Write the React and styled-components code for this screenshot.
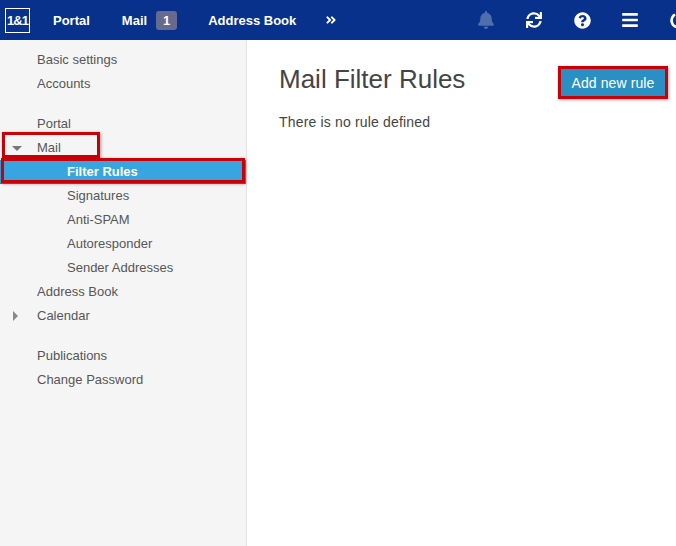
import React from "react";
import styled, { createGlobalStyle } from "styled-components";
import { FaBell, FaSync, FaQuestionCircle, FaBars, FaPowerOff, FaAngleDoubleRight } from "react-icons/fa";

const Global = createGlobalStyle`
  html, body { margin: 0; padding: 0; height: 100%; overflow: hidden; background: #fff; }
  body { font-family: "Liberation Sans", Arial, sans-serif; color: #444; }
  #root { height: 100%; }
`;

const Page = styled.div`
  width: 676px;
  height: 546px;
  display: flex;
  flex-direction: column;
  overflow: hidden;
`;

const TopBar = styled.header`
  flex: 0 0 40px;
  height: 40px;
  background: #08318b;
  display: flex;
  align-items: center;
  padding-left: 5px;
  color: #fff;
  overflow: hidden;
`;

const Logo = styled.div`
  width: 23px;
  height: 23px;
  border: 1px solid #fff;
  display: flex;
  align-items: center;
  justify-content: center;
  font-size: 13px;
  font-weight: 700;
  letter-spacing: -1px;
  margin-right: 23px;
  flex: none;
`;

const NavItem = styled.span`
  font-size: 13px;
  font-weight: 700;
  margin-right: ${(p) => p.$gap}px;
  white-space: nowrap;
`;

const Badge = styled.span`
  width: 21px;
  height: 19px;
  border-radius: 3px;
  background: #676a8e;
  color: #fff;
  font-size: 13px;
  font-weight: 700;
  display: flex;
  align-items: center;
  justify-content: center;
  margin-right: 31px;
  flex: none;
`;

const More = styled.span`
  display: flex;
  font-size: 12px;
  margin-right: 140px;
  flex: none;
`;

const IconSlot = styled.span`
  flex: none;
  width: 18px;
  margin-right: 30px;
  display: flex;
  justify-content: center;
  font-size: ${(p) => p.$size || 17}px;
  color: ${(p) => (p.$dim ? "#4f6eac" : "#fff")};
`;

const Body = styled.div`
  flex: 1;
  display: flex;
  min-height: 0;
`;

const Sidebar = styled.nav`
  width: 246px;
  flex: none;
  box-sizing: content-box;
  background: #f5f5f5;
  border-right: 1px solid #e3e3e3;
  padding-top: 8px;
`;

const Group = styled.div`
  margin-bottom: 16px;
`;

const Row = styled.div`
  position: relative;
  height: 24px;
  line-height: 24px;
  font-size: 13px;
  color: #555;
  padding-left: ${(p) => (p.$sub ? 67 : 37)}px;
`;

const ActiveRow = styled(Row)`
  background: #36a5e0;
  color: #fff;
  font-weight: 700;
  height: 23px;
  line-height: 23px;
  margin-bottom: 1px;
  box-shadow: 0 1px 0 #2c86b8;
`;

const ArrowDown = styled.i`
  position: absolute;
  left: 12px;
  top: 10px;
  border-style: solid;
  border-width: 5px 5px 0 5px;
  border-color: #777 transparent transparent transparent;
`;

const ArrowRight = styled.i`
  position: absolute;
  left: 13px;
  top: 7px;
  border-style: solid;
  border-width: 5px 0 5px 5px;
  border-color: transparent transparent transparent #888;
`;

const Annotation = styled.span`
  position: absolute;
  left: ${(p) => p.$left}px;
  top: ${(p) => p.$top}px;
  width: ${(p) => p.$w}px;
  height: ${(p) => p.$h}px;
  box-sizing: border-box;
  border: 3px solid #c90007;
  box-shadow: 1px 1px 3px rgba(0, 0, 0, 0.35);
  pointer-events: none;
`;

const Main = styled.main`
  flex: 1;
  padding: 24px 8px 0 32px;
  min-width: 0;
`;

const TitleRow = styled.div`
  display: flex;
  justify-content: space-between;
  align-items: flex-start;
`;

const Title = styled.h1`
  margin: 0;
  font-size: 26px;
  font-weight: 400;
  line-height: 30px;
  color: #444;
`;

const AddButton = styled.button`
  position: relative;
  width: 110px;
  height: 33px;
  margin-top: 2px;
  border: 0;
  padding: 0;
  background: #2a90c4;
  color: #fff;
  font-family: inherit;
  font-size: 14px;
  letter-spacing: 0.1px;
`;

const Note = styled.p`
  margin: 13px 0 0;
  font-size: 14px;
  line-height: 20px;
  letter-spacing: 0.17px;
  color: #444;
`;

export default function App() {
  return (
    <Page>
      <Global />
      <TopBar>
        <Logo>1&amp;1</Logo>
        <NavItem $gap={32}>Portal</NavItem>
        <NavItem $gap={9}>Mail</NavItem>
        <Badge>1</Badge>
        <NavItem $gap={29}>Address Book</NavItem>
        <More><FaAngleDoubleRight /></More>
        <IconSlot $dim $size={18}><FaBell /></IconSlot>
        <IconSlot $size={16}><FaSync /></IconSlot>
        <IconSlot><FaQuestionCircle /></IconSlot>
        <IconSlot $size={18}><FaBars /></IconSlot>
        <IconSlot><FaPowerOff /></IconSlot>
      </TopBar>
      <Body>
        <Sidebar>
          <Group>
            <Row>Basic settings</Row>
            <Row>Accounts</Row>
          </Group>
          <Group>
            <Row>Portal</Row>
            <Row>
              <ArrowDown />
              Mail
              <Annotation $left={2} $top={-4} $w={98} $h={26} />
            </Row>
            <ActiveRow $sub>
              Filter Rules
              <Annotation $left={1} $top={-2} $w={244} $h={25} />
            </ActiveRow>
            <Row $sub>Signatures</Row>
            <Row $sub>Anti-SPAM</Row>
            <Row $sub>Autoresponder</Row>
            <Row $sub>Sender Addresses</Row>
            <Row>Address Book</Row>
            <Row>
              <ArrowRight />
              Calendar
            </Row>
          </Group>
          <Group>
            <Row>Publications</Row>
            <Row>Change Password</Row>
          </Group>
        </Sidebar>
        <Main>
          <TitleRow>
            <Title>Mail Filter Rules</Title>
            <AddButton>
              Add new rule
              <Annotation $left={0} $top={0} $w={110} $h={33} />
            </AddButton>
          </TitleRow>
          <Note>There is no rule defined</Note>
        </Main>
      </Body>
    </Page>
  );
}
